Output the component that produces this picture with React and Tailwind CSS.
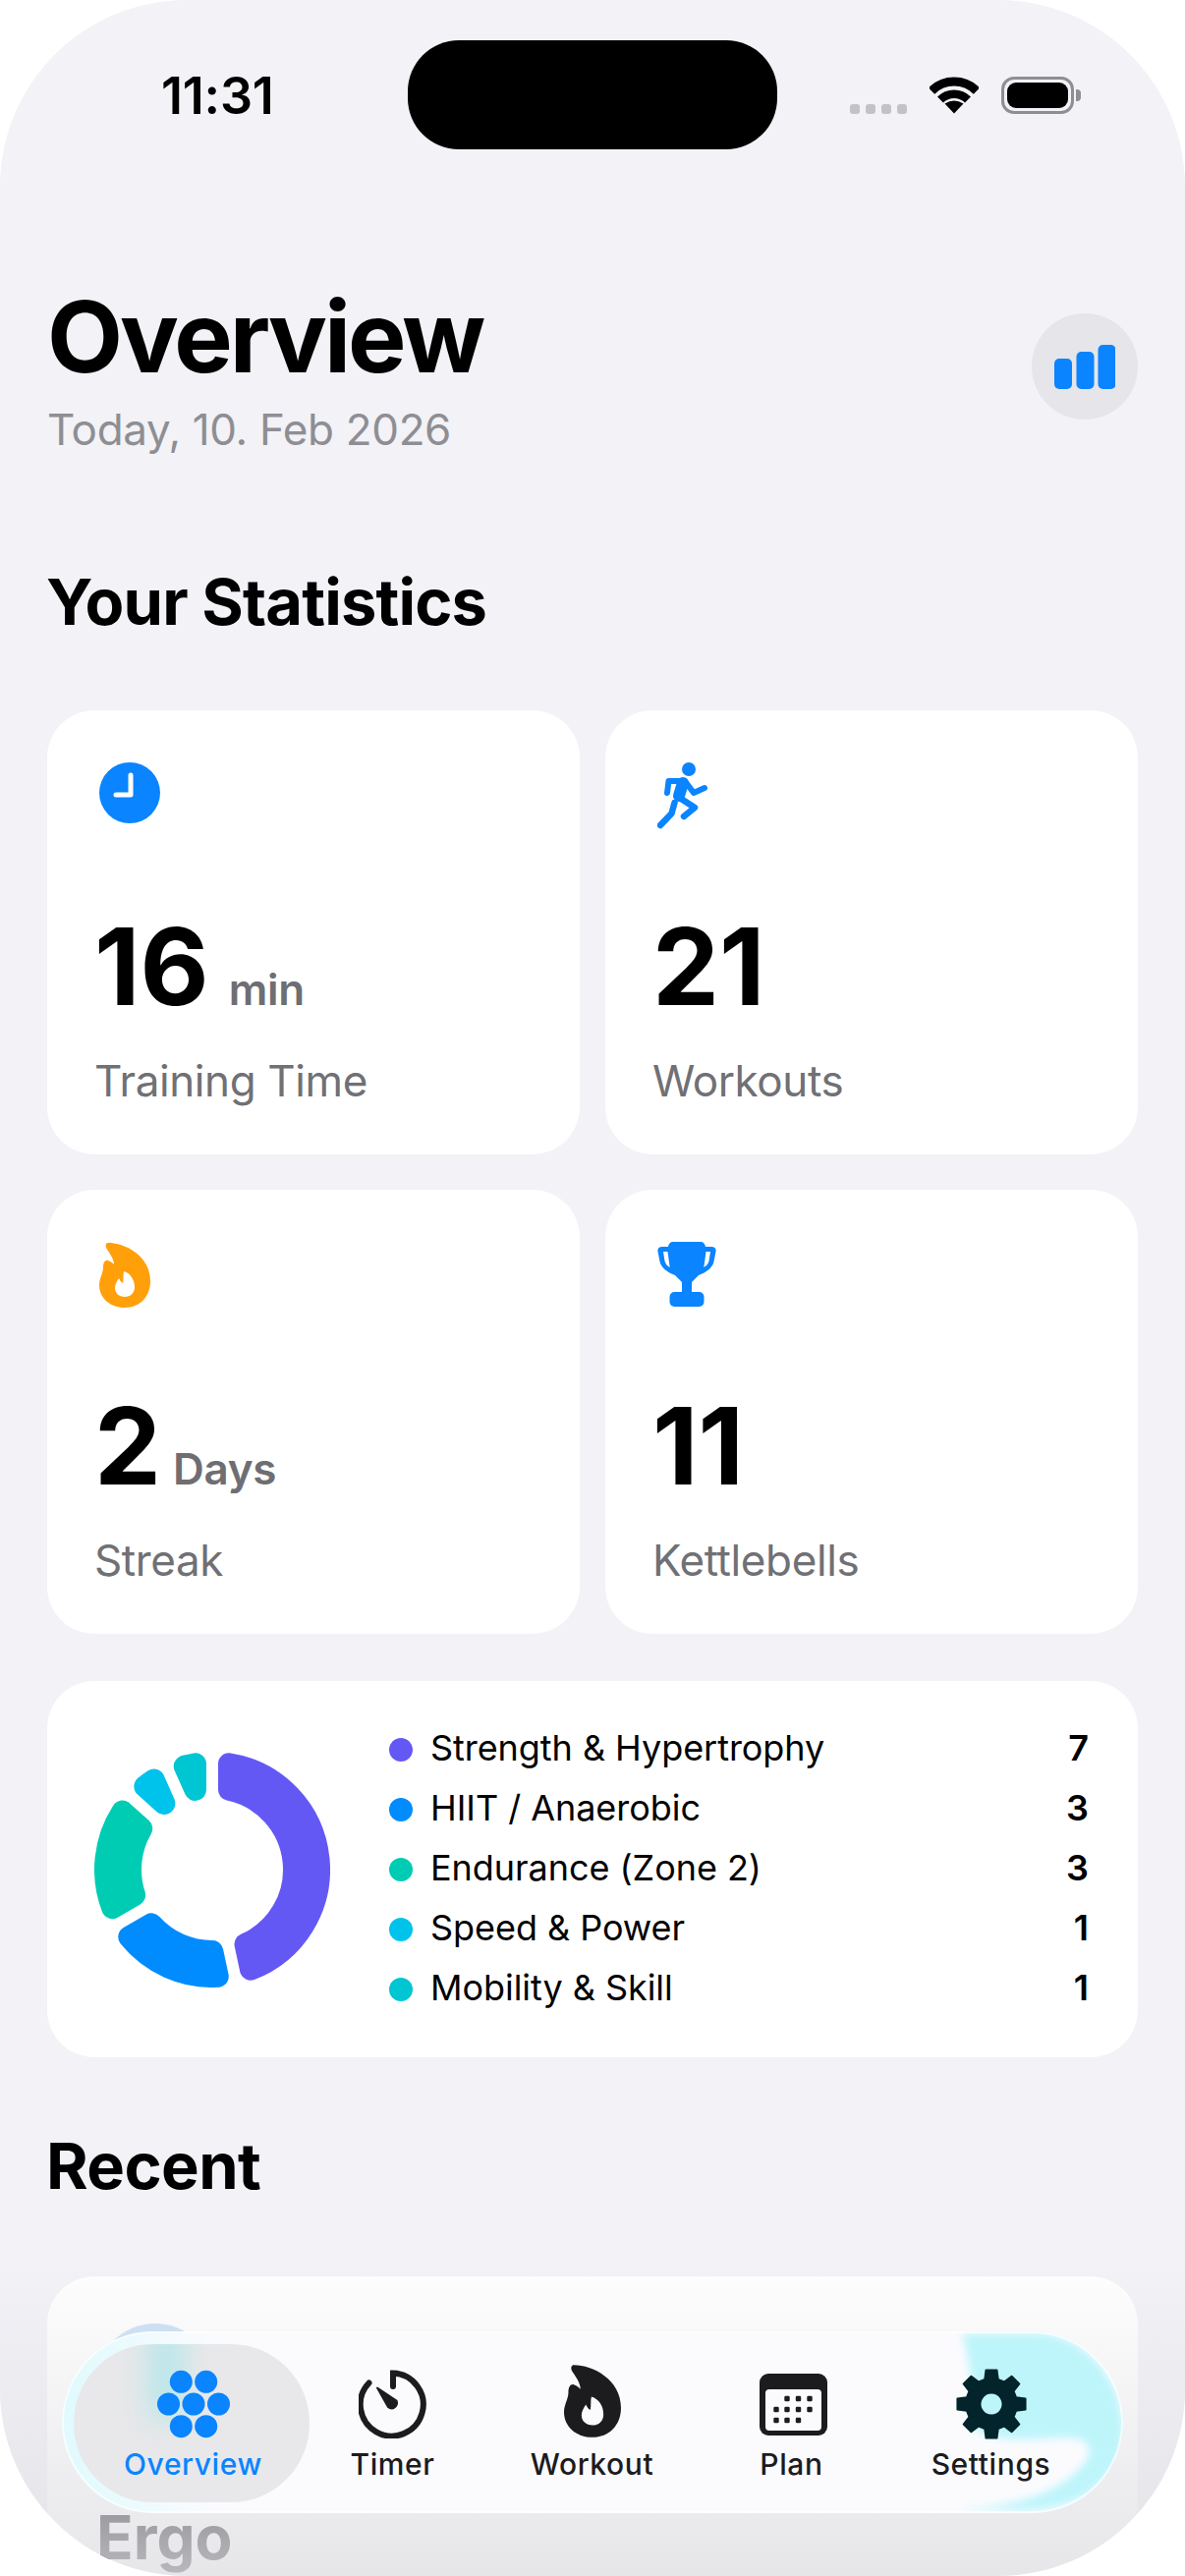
import React from "react";

const toRad = (deg) => (deg * Math.PI) / 180;

// donut segment: an annular sector, inset so a fat round stroke gives the rounded corners
const segmentPath = (from, to, outer, inner, inset, cx = 120, cy = 120) => {
  const pt = (deg, rad) => `${(cx + rad * Math.sin(toRad(deg))).toFixed(2)} ${(cy - rad * Math.cos(toRad(deg))).toFixed(2)}`;
  const ia = (rad) => (Math.asin(inset / rad) * 180) / Math.PI;
  const large = to - from > 180 ? 1 : 0;
  return `M${pt(from + ia(outer), outer)} A${outer} ${outer} 0 ${large} 1 ${pt(to - ia(outer), outer)} L${pt(to - ia(inner), inner)} A${inner} ${inner} 0 ${large} 0 ${pt(from + ia(inner), inner)} Z`;
};

const gearPath = (() => {
  const c = 36;
  const pt = (deg, rad) => `${(c + rad * Math.sin(toRad(deg))).toFixed(2)} ${(c - rad * Math.cos(toRad(deg))).toFixed(2)}`;
  let d = "";
  for (let i = 0; i < 8; i++) {
    const t = i * 45;
    d += `${i === 0 ? "M" : "L"}${pt(t - 15, 26)} L${pt(t - 9, 35)} L${pt(t + 9, 35)} L${pt(t + 15, 26)} `;
  }
  return d + "Z";
})();

const categories = [
  { name: "Strength & Hypertrophy", count: 7, dot: "bg-[#6458f5]", fill: "#6458f5", from: 0, to: 168 },
  { name: "HIIT / Anaerobic", count: 3, dot: "bg-[#008cff]", fill: "#008cff", from: 168, to: 240 },
  { name: "Endurance (Zone 2)", count: 3, dot: "bg-[#00ccb4]", fill: "#00ccb4", from: 240, to: 312 },
  { name: "Speed & Power", count: 1, dot: "bg-[#00c3eb]", fill: "#00c3eb", from: 312, to: 336 },
  { name: "Mobility & Skill", count: 1, dot: "bg-[#00c5d2]", fill: "#00c5d2", from: 336, to: 360 },
];

const Wifi = () => (
  <svg width="50" height="38" viewBox="0 0 50 38" fill="none" stroke="#000">
    <path d="M2 14.5A32.5 32.5 0 0 1 48 14.5" strokeWidth="9" />
    <path d="M11 23.5A20 20 0 0 1 39 23.5" strokeWidth="8.5" />
    <path d="M15.5 27.5Q25 21.5 34.5 27.5L25 37.5Z" fill="#000" stroke="none" />
  </svg>
);

const Battery = () => (
  <div className="flex items-center gap-[2px]">
    <div className="flex h-[38px] w-[74px] items-center justify-center rounded-[13px] border-[3px] border-[#8e8e93]">
      <div className="h-[26px] w-[62px] rounded-[9px] bg-black" />
    </div>
    <div className="h-[12px] w-[5px] rounded-r-[4px] bg-[#8e8e93]" />
  </div>
);

const BarsIcon = () => (
  <svg width="62" height="45" viewBox="0 0 62 45" fill="#0a84ff">
    <rect x="0" y="14" width="18" height="31" rx="5" />
    <rect x="22.5" y="7" width="18" height="38" rx="5" />
    <rect x="44.5" y="0" width="18" height="45" rx="5" />
  </svg>
);

const ClockIcon = () => (
  <svg width="62" height="62" viewBox="0 0 62 62">
    <circle cx="31" cy="31" r="31" fill="#0a84ff" />
    <path d="M32 13V33H17" fill="none" stroke="#fff" strokeWidth="5" strokeLinecap="round" strokeLinejoin="round" />
  </svg>
);

const RunnerIcon = () => (
  <svg width="52" height="68" viewBox="0 0 52 68" fill="none" stroke="#0a84ff" strokeLinecap="round" strokeLinejoin="round">
    <circle cx="32" cy="7" r="7" fill="#0a84ff" stroke="none" />
    <path d="M10 31L11.5 19H28L37 31L48 26" strokeWidth="6" />
    <path d="M26 21L22 34" strokeWidth="12" />
    <path d="M21 35L38 46L27 55" strokeWidth="6.5" />
    <path d="M17.5 41L14.5 52L3 64" strokeWidth="6.5" />
  </svg>
);

const Flame = ({ width, height, className }) => (
  <svg width={width} height={height} viewBox="0 0 52 67" className={className} fill="currentColor">
    <path
      fillRule="evenodd"
      d="M9 1C26 1 52 14 52 40C52 56 41 67 26 67C11 67 0 57 0 44C0 37 4 32 4 26C4 21 6 18 9 19C12 20 14 22 15 23C15 17 10 11 7 6C6 3 7 1 9 1ZM25 30C32 32 36 39 36 46C36 52 32 56 26 56C20 56 16 52 16 47C16 43 18 40 20 37C21 39 22 41 24 42C25 38 24 34 25 30Z"
    />
  </svg>
);

const TrophyIcon = () => (
  <svg width="60" height="66" viewBox="0 0 60 66" fill="#0a84ff">
    <path
      fillRule="evenodd"
      d="M16 0H44C47 0 48.5 2 49 5H55C58.5 5 60 7 59.5 10L57.5 20C56.5 26 50 31 42 34L35 41V52H25V41L18 34C10 31 3.5 26 2.5 20L0.5 10C0 7 1.5 5 5 5H11C11.5 2 13 0 16 0ZM6 10H10.5L12.7 26C9.5 24 8 22 7.4 19ZM49.5 10H54L52.6 19C52 22 50.5 24 47.3 26Z"
    />
    <rect x="12.5" y="51" width="35" height="15" rx="5" />
  </svg>
);

const Donut = () => (
  <svg width="240" height="240" viewBox="0 0 240 240" className="shrink-0">
    {categories.map((c) => (
      <path key={c.name} d={segmentPath(c.from, c.to, 109, 83, 17)} fill={c.fill} stroke={c.fill} strokeWidth="22" strokeLinejoin="round" />
    ))}
  </svg>
);

const FlowerIcon = () => (
  <svg width="74" height="70" viewBox="0 0 74 70" fill="#0a84ff">
    {[[24.3, 12.3], [49.7, 12.3], [11.5, 35], [37, 35], [62.5, 35], [24.3, 57.7], [49.7, 57.7]].map(([cx, cy]) => (
      <circle key={`${cx}-${cy}`} cx={cx} cy={cy} r="11.5" />
    ))}
  </svg>
);

const TimerIcon = () => (
  <svg width="70" height="70" viewBox="0 0 70 70" fill="none">
    <path d="M35 17V3.5A32 32 0 1 1 10.5 13.5" stroke="#1c1c1e" strokeWidth="6" strokeLinecap="round" />
    <path d="M19 18.5L38.5 31.5A5.5 5.5 0 0 1 30 38Z" fill="#1c1c1e" stroke="#1c1c1e" strokeWidth="2" strokeLinejoin="round" />
  </svg>
);

const CalendarIcon = () => {
  const dots = [
    [28, 25.5], [39.5, 25.5], [51, 25.5],
    [17, 36.5], [28, 36.5], [39.5, 36.5], [51, 36.5],
    [17, 47.5], [28, 47.5], [39.5, 47.5],
  ];
  return (
    <svg width="69" height="63" viewBox="0 0 69 63" className="ml-[3px]">
      <rect width="69" height="63" rx="9" fill="#1c1c1e" />
      <rect x="6" y="16" width="57" height="42" rx="4" fill="#fbfbfe" />
      {dots.map(([x, y]) => (
        <rect key={`${x}-${y}`} x={x - 2.7} y={y - 2.7} width="5.4" height="5.4" rx="1.2" fill="#1c1c1e" />
      ))}
    </svg>
  );
};

const GearIcon = () => (
  <svg width="72" height="72" viewBox="0 0 72 72">
    <path d={`${gearPath} M36 24.5a11.5 11.5 0 1 0 0.01 0Z`} fillRule="evenodd" fill="#02242a" stroke="#02242a" strokeWidth="2" strokeLinejoin="round" />
  </svg>
);

const StatCard = ({ icon, value, unit, unitGap, label }) => (
  <div className="h-[452px] rounded-[48px] bg-white pl-[50px] pt-[53px]">
    <div className="ml-[3px] h-[70px]">{icon}</div>
    <div className="-ml-[2px] mt-[84px] flex h-[108px] items-baseline">
      <span className="text-[108px] font-bold leading-[108px] text-black">{value}</span>
      {unit && <span className={`${unitGap} text-[44px] font-semibold leading-[52px] tracking-[-0.3px] text-[#6e6e73]`}>{unit}</span>}
    </div>
    <div className="-ml-[2px] mt-[36px] text-[44px] leading-[52px] tracking-[-0.4px] text-[#707075]">{label}</div>
  </div>
);

const Tab = ({ icon, label, active }) => (
  <div className="relative flex w-[203px] flex-col items-center">
    <div className="flex h-[76px] items-center">{icon}</div>
    <div className={`mt-[5px] text-[30px] font-medium leading-[36px] tracking-[0.6px] ${active ? "text-[#0a84ff]" : "text-[#1c1c1e]"}`}>{label}</div>
  </div>
);

export default function App() {
  return (
    <div className="h-[2622px] w-[1206px] bg-white font-[Inter,sans-serif]">
      <div className="relative h-full overflow-hidden rounded-[190px] bg-[#f2f2f7]">
        {/* status bar */}
        <div className="flex h-[152px] items-end pl-[164px]">
          <div className="flex h-[111px] w-[251px] items-center pt-[2px] text-[52px] font-semibold leading-none tracking-[-0.2px] text-black">11:31</div>
          <div className="h-[111px] w-[376px] rounded-[52px] bg-black" />
          <div className="mb-[36px] ml-[74px] flex items-end">
            <div className="flex gap-[6px]">
              {[0, 1, 2, 3].map((i) => (
                <div key={i} className="h-[10px] w-[10px] rounded-[3px] bg-[#c2c2c7]" />
              ))}
            </div>
            <div className="ml-[23px]"><Wifi /></div>
            <div className="ml-[23px]"><Battery /></div>
          </div>
        </div>

        {/* header */}
        <div className="mt-[141px] flex items-start justify-between px-[48px]">
          <div>
            <h1 className="text-[100px] font-bold leading-[100px] tracking-[-3px] text-black">Overview</h1>
            <div className="mt-[18px] text-[44px] leading-[52px] tracking-[-0.35px] text-[#8e8e93]">Today, 10. Feb 2026</div>
          </div>
          <div className="mt-[26px] flex h-[108px] w-[108px] items-center justify-center rounded-full bg-[#e5e5ea]">
            <BarsIcon />
          </div>
        </div>

        <h2 className="ml-[47px] mt-[114px] text-[65px] font-bold leading-[72px] tracking-[-0.85px] text-black">Your Statistics</h2>

        {/* stat cards */}
        <div className="mx-[48px] mt-[74px] grid grid-cols-2 gap-x-[26px] gap-y-[36px]">
          <StatCard icon={<ClockIcon />} value="16" unit="min" unitGap="ml-[20px]" label="Training Time" />
          <StatCard icon={<RunnerIcon />} value="21" label="Workouts" />
          <StatCard icon={<Flame width={52} height={67} className="text-[#ff9f0a]" />} value="2" unit="Days" unitGap="ml-[12px]" label="Streak" />
          <StatCard icon={<TrophyIcon />} value="11" label="Kettlebells" />
        </div>

        {/* categories */}
        <div className="mx-[48px] mt-[48px] flex h-[383px] items-center rounded-[48px] bg-white pl-[48px] pr-[50px]">
          <Donut />
          <div className="ml-[60px] flex flex-1 flex-col">
            {categories.map((c) => (
              <div key={c.name} className="flex h-[61px] items-center">
                <div className={`h-[24px] w-[24px] rounded-full ${c.dot}`} />
                <div className="-mt-[3px] ml-[18px] flex-1 text-[36px] leading-[44px] tracking-[-0.05px] text-black">{c.name}</div>
                <div className="-mt-[3px] text-[36px] font-semibold leading-[44px] text-black">{c.count}</div>
              </div>
            ))}
          </div>
        </div>

        <h2 className="ml-[47px] mt-[75px] text-[65px] font-bold leading-[72px] tracking-[-0.6px] text-black">Recent</h2>

        {/* recent card, mostly under the tab bar */}
        <div className="mx-[48px] mt-[76px] h-[400px] rounded-[48px] bg-white pl-[50px] pt-[48px]">
          <div className="h-[120px] w-[120px] rounded-full bg-[#c8e0f6]" />
          <div className="mt-[62px] text-[62px] font-bold leading-[72px] text-[#202024]">Ergo</div>
        </div>

        {/* fade under the tab bar */}
        <div className="absolute inset-x-0 bottom-0 h-[332px] bg-linear-to-b from-[#e0e0e400] to-[#e0e0e4cc]" />

        {/* tab bar */}
        <div className="absolute bottom-[64px] left-[63px] h-[185px] w-[1080px] overflow-hidden rounded-[93px] bg-linear-to-r from-[#e0fafd] from-0% via-[#fbfbfe] via-15% to-[#fbfbfe]">
          <div className="absolute left-[12px] top-[13px] h-[161px] w-[240px] overflow-hidden rounded-[80px] bg-[#e8e8ea]">
            <div className="absolute left-[76px] top-[-14px] h-[90px] w-[36px] bg-[#a4e6ea] opacity-70 blur-[14px]" />
          </div>
          <svg className="absolute left-[880px] top-0" width="200" height="185" viewBox="0 0 200 185">
            <defs>
              <filter id="soft"><feGaussianBlur stdDeviation="4" /></filter>
            </defs>
            <path filter="url(#soft)" d="M36 2H120C170 10 205 60 200 110C195 150 160 178 110 182H36V181C90 178 135 165 160 135C172 118 165 108 140 108C105 110 65 112 50 100C44 70 50 50 36 2Z" fill="#bdf5fb" />
          </svg>
          <div className="absolute inset-0 rounded-[93px] border-2 border-white/70" />
          <div className="relative flex pl-[32px] pt-[36px]">
            <Tab icon={<FlowerIcon />} label="Overview" active />
            <Tab icon={<TimerIcon />} label="Timer" />
            <Tab icon={<Flame width={58} height={75} className="-mt-[8px] text-[#1c1c1e]" />} label="Workout" />
            <Tab icon={<CalendarIcon />} label="Plan" />
            <Tab icon={<GearIcon />} label="Settings" />
          </div>
        </div>
      </div>
    </div>
  );
}
